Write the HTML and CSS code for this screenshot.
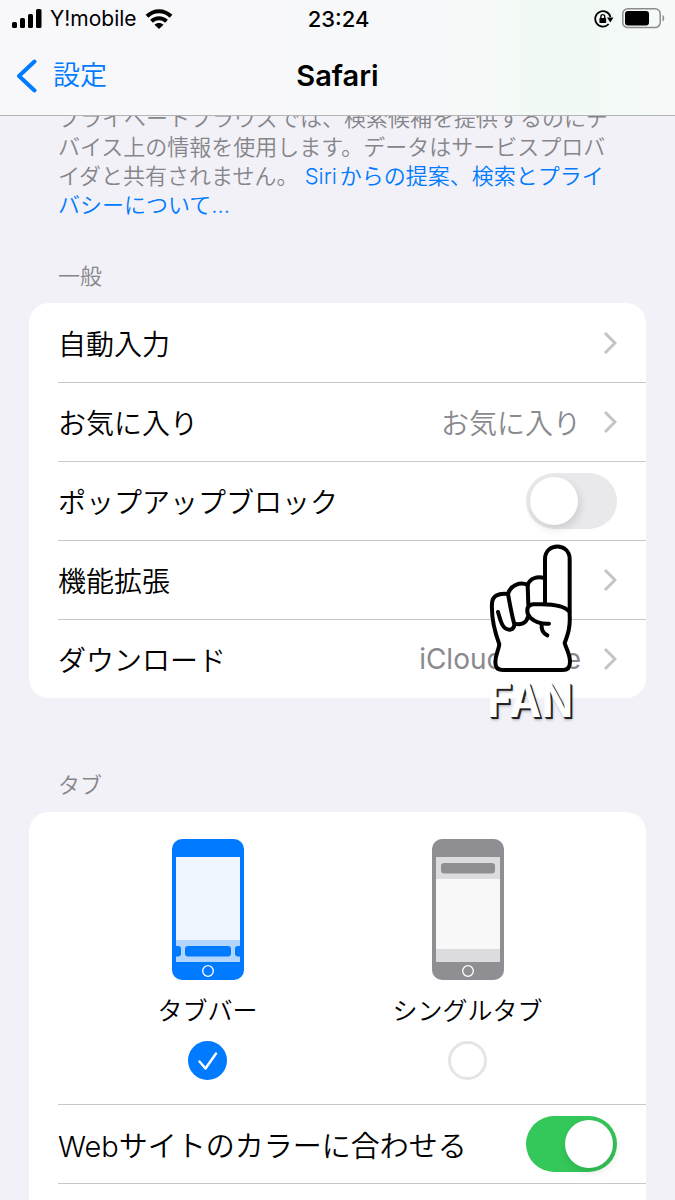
FILE: index.html
```html
<!DOCTYPE html>
<html lang="ja">
<head>
<meta charset="utf-8">
<meta name="viewport" content="width=device-width, initial-scale=1">
<title>Safari</title>
<link rel="stylesheet" href="styles.css">
</head>
<body>
<header class="top">
  <div class="status">
    <div class="status-left">
      <svg class="signal" width="30" height="20" viewBox="0 0 30 20" aria-hidden="true">
        <rect x="0" y="13" width="5" height="6" rx="1.5"/><rect x="8" y="9" width="5" height="10" rx="1.5"/><rect x="16" y="5" width="5" height="14" rx="1.5"/><rect x="24" y="0" width="5.5" height="19" rx="1.5"/>
      </svg>
      <span>Y!mobile</span>
      <svg class="wifi" width="28" height="20" viewBox="0 0 28 20" fill="none" stroke="#000" stroke-width="4" aria-hidden="true">
        <path d="M2 7.3C9 .6 19 .6 26 7.3"/><path d="M6.500 12.200C10.800 8.200 17.200 8.200 21.500 12.200"/><path d="M9.500 15.700c2.500-2.200 6.500-2.200 9 0L14 20z" fill="#000" stroke="none"/>
      </svg>
    </div>
    <time class="clock">23:24</time>
    <div class="status-right">
      <svg width="20" height="18" viewBox="0 0 20 18" fill="none" stroke="#000" stroke-width="1.8" aria-hidden="true">
        <path d="M14.700 14A7.700 7.700 0 1 1 16.400 7"/><path d="M13 7.500h6.500l-3.200 5z" fill="#000" stroke="none"/>
        <path d="M6.900 9V6.500a1.900 1.900 0 0 1 3.800 0V9" stroke-width="1.400"/><rect x="5.400" y="8" width="6.800" height="5" rx=".8" fill="#000" stroke="none"/>
      </svg>
      <svg width="43" height="21" viewBox="0 0 43 21" aria-hidden="true">
        <rect x=".8" y=".8" width="37.400" height="18.800" rx="5" fill="none" stroke="#8c8c8c" stroke-width="1.500"/><rect x="3" y="3" width="24" height="14.500" rx="3"/><path d="M40.500 7c2.300.8 2.300 5.700 0 6.500z" fill="#8c8c8c"/>
      </svg>
    </div>
  </div>
  <nav class="nav">
    <a class="back" href="#">
      <svg width="22" height="34" viewBox="0 0 22 34" fill="none" stroke="currentColor" stroke-width="4" stroke-linecap="round" stroke-linejoin="round" aria-hidden="true"><path d="M18.500 2.500L3 17l15.500 14.500"/></svg>
      <span>設定</span>
    </a>
    <h1 class="title">Safari</h1>
  </nav>
</header>

<main class="content">
  <p class="note">プライベートブラウズでは、検索候補を提供するのにデバイス上の情報を使用します。データはサービスプロバイダと共有されません。 <a href="#">Siriからの提案、検索とプライバシーについて...</a></p>

  <h2 class="heading">一般</h2>
  <section class="card">
    <a class="row" href="#"><span>自動入力</span><svg class="chevron" viewBox="0 0 14 24" aria-hidden="true"><path d="M2 2l10 10L2 22"/></svg></a>
    <a class="row" href="#"><span>お気に入り</span><span class="value">お気に入り</span><svg class="chevron" viewBox="0 0 14 24" aria-hidden="true"><path d="M2 2l10 10L2 22"/></svg></a>
    <label class="row"><span>ポップアップブロック</span><input class="switch" type="checkbox" role="switch"></label>
    <a class="row" href="#"><span>機能拡張</span><svg class="chevron" viewBox="0 0 14 24" aria-hidden="true"><path d="M2 2l10 10L2 22"/></svg></a>
    <a class="row" href="#"><span>ダウンロード</span><span class="value latin">iCloud Drive</span><svg class="chevron" viewBox="0 0 14 24" aria-hidden="true"><path d="M2 2l10 10L2 22"/></svg></a>
    <div class="pointer">
      <svg width="110" height="140" viewBox="0 0 330 420" fill="none" stroke="#000" stroke-width="12" stroke-linecap="round" stroke-linejoin="round" aria-hidden="true">
        <path fill="#fff" d="M195 205V72C195 22 269 22 269 72V240C271 275 265 295 254 324C258 340 270 358 270 380Q270 405 248 405H67Q46 405 46 382C46 360 56 345 58 328C42 285 34 240 36 205C37 184 54 173 84 177C91 151 121 139 143 150C149 130 171 123 193 129"/>
        <path d="M84 177C89 205 95 239 103 268M54 231C62 257 66 285 91 284Q103 281 103 266C121 270 139 266 143 247M143 150L145 209"/>
        <path fill="#fff" d="M268 230C252 212 216 208 186 208H159C137 211 138 235 151 248C164 260 184 267 207 266"/>
        <path d="M185 267C183 285 189 295 202 301"/>
      </svg>
      <span class="pointer-text">FAN</span>
    </div>
  </section>

  <h2 class="heading heading-tabs">タブ</h2>
  <section class="card card-tabs">
    <div class="choices">
      <label class="choice">
        <svg width="72" height="141" viewBox="0 0 72 141" aria-hidden="true">
          <rect width="72" height="141" rx="10" fill="#007aff"/><rect x="4" y="18" width="64" height="105" fill="#eff6ff"/><rect x="4" y="101" width="64" height="22" fill="#b2d5fd"/>
          <rect x="13" y="107" width="46" height="10.500" rx="3" fill="#007aff"/><path d="M3 107h3q3 0 3 3v4.500q0 3-3 3H3zM69 107h-3q-3 0-3 3v4.500q0 3 3 3h3z" fill="#007aff"/><circle cx="36" cy="132" r="5.300" fill="none" stroke="#fff" stroke-width="1.300"/>
        </svg>
        <span>タブバー</span>
        <input class="radio" type="radio" name="tabs" checked>
        <svg class="check" width="39" height="39" viewBox="0 0 39 39" fill="none" stroke="#fff" stroke-width="2.500" stroke-linecap="round" stroke-linejoin="round" aria-hidden="true"><path d="M11.500 20.500l6 7L28 12.500"/></svg>
      </label>
      <label class="choice">
        <svg width="72" height="141" viewBox="0 0 72 141" aria-hidden="true">
          <rect width="72" height="141" rx="10" fill="#8e8e93"/><rect x="4" y="18" width="64" height="105" fill="#dcdcde"/><rect x="4" y="40" width="64" height="70" fill="#f8f8f8"/>
          <rect x="9" y="24" width="54" height="10.500" rx="3" fill="#8e8e93"/><circle cx="36" cy="132" r="5.300" fill="none" stroke="#fff" stroke-width="1.300"/>
        </svg>
        <span>シングルタブ</span>
        <input class="radio" type="radio" name="tabs">
      </label>
    </div>
    <label class="row row-ruled"><span>Webサイトのカラーに合わせる</span><input class="switch" type="checkbox" role="switch" checked></label>
  </section>
</main>
</body>
</html>
```
FILE: styles.css
```css
* { box-sizing: border-box; }

body {
  margin: 0;
  height: 100vh;
  overflow: hidden;
  display: flex;
  flex-direction: column;
  background: #f2f1f7;
  color: #000;
  font-family: Inter, "Noto Sans CJK JP", sans-serif;
  font-weight: 350;
}

a { color: inherit; text-decoration: none; }
svg { display: block; flex: none; }

.top {
  flex: none;
  height: 116px;
  border-bottom: 1px solid #b5b5b8;
  background: linear-gradient(90deg, #f8f8fa 0%, #f7f8f9 66%, #f1faf4 82%, #f6f9f8 100%);
}

.status {
  display: grid;
  grid-template-columns: 1fr auto 1fr;
  align-items: center;
  height: 37px;
  padding: 0 10px 0 12px;
  font-size: 21px;
  font-weight: 400;
}
.status-left, .status-right { display: flex; align-items: center; gap: 8px; }
.status-right { justify-content: flex-end; }
.clock { font-size: 22px; font-weight: 500; }

.nav {
  display: grid;
  grid-template-columns: 1fr auto 1fr;
  align-items: center;
  height: 77px;
  padding: 0 16px;
}
.back { display: flex; align-items: center; gap: 15px; color: #007aff; font-size: 27px; line-height: 36px; }
.title { margin: 0; font-size: 29px; font-weight: 600; }

.content { flex: 1; min-height: 0; overflow: hidden; padding: 0 29px; }

.note {
  margin: -12px 0 0;
  padding: 0 29px;
  color: #85858a;
  font-size: 22px;
  line-height: 29px;
  text-autospace: normal;
}
.note a { color: #007aff; }

.heading {
  margin: 0;
  padding: 42px 29px 12px;
  color: #85858a;
  font-size: 22px;
  font-weight: 350;
  line-height: 29px;
}
.heading-tabs { padding-top: 73px; }

.card { position: relative; padding-left: 29px; border-radius: 20px; background: #fff; }

.row {
  display: flex;
  align-items: center;
  height: 79px;
  padding-right: 29px;
  font-size: 28px;
}
.row + .row, .row-ruled { border-top: 1px solid #c8c8cb; }
.row > :first-child { flex: 1; }
.value { color: #8a8a8e; }
.latin { font-weight: 400; }

.chevron {
  width: 14px;
  height: 24px;
  margin-left: 22px;
  fill: none;
  stroke: #c4c4c7;
  stroke-width: 3;
}

.switch {
  appearance: none;
  display: flex;
  flex: none;
  width: 91px;
  height: 56px;
  margin: 0;
  padding: 4px;
  border-radius: 28px;
  background: #e9e9eb;
}
.switch::before {
  content: "";
  width: 48px;
  height: 48px;
  border-radius: 50%;
  background: #fff;
  box-shadow: 2px 4px 8px rgba(0, 0, 0, .12);
}
.switch:checked { justify-content: flex-end; background: #34c759; }

.pointer { position: absolute; top: 232px; right: 56px; width: 110px; pointer-events: none; }
.pointer-text {
  display: block;
  padding-right: 10px;
  color: #fff;
  font: bold 46px/44px "Noto Sans CJK JP", sans-serif;
  text-align: center;
  text-shadow: 1px 1px 0 #222, 2px 2px 0 #222, 2px 3px 3px rgba(0, 0, 0, .3);
}

.card-tabs { padding-bottom: 79px; }
.card-tabs .row-ruled { border-bottom: 1px solid #c8c8cb; height: 80px; font-size: 29px; }
.choices { display: flex; justify-content: center; height: 292px; padding: 27px 29px 0 0; }
.choice {
  position: relative;
  display: flex;
  flex: 0 1 260px;
  flex-direction: column;
  align-items: center;
  font-size: 25px;
  line-height: 30px;
}
.choice span { margin: 16px 0 15px; }
.radio {
  appearance: none;
  width: 39px;
  height: 39px;
  margin: 0;
  border: 3px solid #e5e5e6;
  border-radius: 50%;
}
.radio:checked { border: 0; background: #007aff; }
.check { margin-top: -39px; position: relative; }
```
